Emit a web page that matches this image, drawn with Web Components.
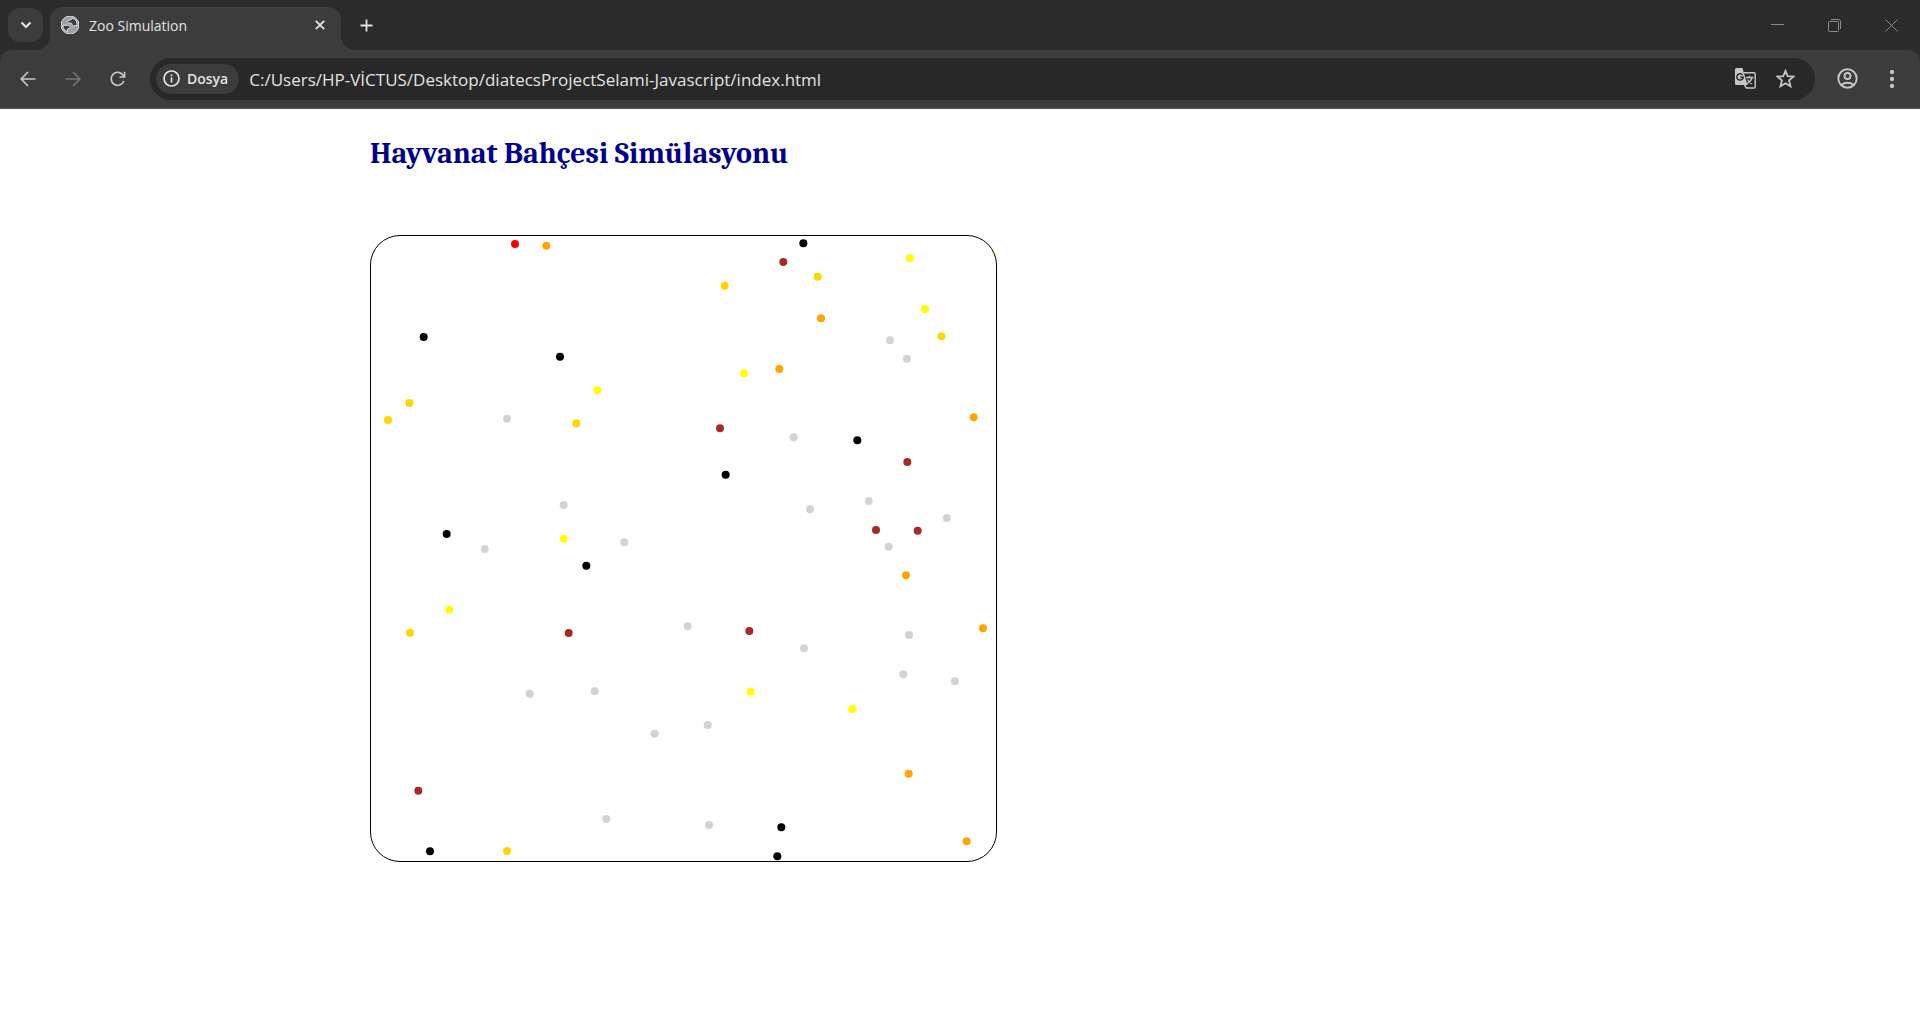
<!DOCTYPE html>
<html lang="tr">
<head>
<meta charset="utf-8">
<title>Zoo Simulation</title>
<style>
html, body { margin: 0; height: 100%; }
body { display: flex; flex-direction: column; background: #fff; }
</style>
</head>
<body>
<browser-frame>
  <tab-strip slot="tabs" label="Zoo Simulation"></tab-strip>
  <address-bar slot="bar" scheme="Dosya" url="C:/Users/HP-VİCTUS/Desktop/diatecsProjectSelami-Javascript/index.html"></address-bar>
</browser-frame>
<zoo-page>
  <span slot="title">Hayvanat Bahçesi Simülasyonu</span>
  <zoo-field></zoo-field>
</zoo-page>
<script>
const define = (name, html, setup) => customElements.define(name, class extends HTMLElement {
  connectedCallback() {
    if (this.shadowRoot) return;
    this.attachShadow({ mode: 'open' }).innerHTML = html;
    if (setup) setup(this, this.shadowRoot);
  }
});

const BUTTON = `button { display: flex; align-items: center; justify-content: center; padding: 0; border: 0; background: none; color: inherit; font: inherit; }
svg { display: block; fill: none; stroke: currentColor; }`;

define('browser-frame', `<style>
:host { display: flex; flex-direction: column; background: #2b2b2b; color: #e3e3e3; font-family: "Open Sans", "Noto Sans", sans-serif; }
.bar { background: #3c3c3c; border-radius: 12px 12px 0 0; border-bottom: 2px solid #4a4a4a; }
</style><slot name="tabs"></slot><div class="bar"><slot name="bar"></slot></div>`);

define('tab-strip', `<style>${BUTTON}
:host { display: flex; height: 50px; padding-left: 8px; color: #e3e3e3; }
.search { width: 35px; height: 34px; margin-top: 8px; border-radius: 12px; background: #3c3c3c; }
.tab { display: flex; align-items: center; position: relative; width: 291px; height: 43px; margin: 7px 0 0 7px; padding: 0 11px; box-sizing: border-box; border-radius: 13px 13px 0 0; background: #3c3c3c; }
.tab::before, .tab::after { content: ""; position: absolute; bottom: 0; width: 14px; height: 14px; }
.tab::before { left: -14px; background: radial-gradient(circle at 0 0, transparent 14px, #3c3c3c 14px); }
.tab::after { right: -14px; background: radial-gradient(circle at 100% 0, transparent 14px, #3c3c3c 14px); }
.name { flex: 1; margin-left: 10px; padding-bottom: 6px; font-size: 14px; line-height: 20px; }
.icon, .close { margin-bottom: 7px; }
.close { width: 20px; height: 20px; }
.new { width: 50px; }
.win { width: 57px; color: #8c8c8c; }
.gap { flex: 1; }
</style>
<button class="search" aria-label="Sekme ara"><svg width="12" height="8" stroke-width="2.200"><path d="M1.500 1.500 6 6l4.500-4.500"/></svg></button>
<div class="tab">
<svg class="icon" width="18" height="18" viewBox="0 0 18 18" stroke="none"><circle cx="9" cy="9" r="9" fill="#9aa0a6"/><path fill="#3c3c3c" d="M11 2.100c-.2 1.300-.8 1.900-2 1.900-1.500 0-2.300.7-2.300 1.900 0 .8.500 1.200 1.300 1.200h1.500c1.100 0 1.600.5 1.600 1.500 0 .9.500 1.400 1.400 1.400.8 0 1.200-.5 1.900-.5h1.800A7.200 7.200 0 0 0 11 2.100zM1.800 9.300h4.400c1.800 0 2.900.8 2.900 2.100 0 .8-.6 1.100-1.300 1.100-.9 0-1.300.5-1.300 1.200V15.700A7.200 7.200 0 0 1 1.800 9.300z"/></svg>
<span class="name"></span>
<button class="close" aria-label="Kapat"><svg width="10" height="10" stroke-width="1.800"><path d="m.8.8 8.400 8.400m0-8.400L.8 9.200"/></svg></button>
</div>
<button class="new" aria-label="Yeni sekme"><svg width="13" height="13" stroke-width="1.800"><path d="M6.500 .5v12M.5 6.500h12"/></svg></button>
<div class="gap"></div>
<button class="win" aria-label="Simge durumu"><svg width="13" height="13"><path d="M0 5.500h13"/></svg></button>
<button class="win" aria-label="Geri yükle"><svg width="13" height="13"><path d="M.5 3.500q0-1 1-1h8q1 0 1 1v8q0 1-1 1h-8q-1 0-1-1zM3 .5h7.500q2 0 2 2V10"/></svg></button>
<button class="win" aria-label="Pencereyi kapat"><svg width="13" height="13"><path d="m.5.5 12 12m0-12-12 12"/></svg></button>
`, (el, root) => { root.querySelector('.name').textContent = el.getAttribute('label'); });

define('address-bar', `<style>${BUTTON}
:host { display: flex; align-items: center; height: 57px; color: #c7c7c7; }
.nav { width: 45px; height: 44px; }
.nav:first-of-type { margin-left: 5px; }
.off { color: #757575; }
.box { flex: 1; display: flex; align-items: center; min-width: 0; height: 42px; margin-left: 10px; padding: 0 10px 0 6px; border-radius: 21px; background: #282828; }
.chip { gap: 7px; height: 30px; padding: 0 11px 0 7px; border-radius: 15px; background: #3c3c3c; color: #e3e3e3; font-size: 14px; font-weight: 600; line-height: 20px; }
input { flex: 1; min-width: 0; margin: 0 0 0 10px; padding: 2px 0 0; border: 0; outline: 0; background: none; color: #e3e3e3; font-family: inherit; font-size: 17px; line-height: 24px; }
.in { width: 40px; height: 40px; }
.user { width: 44px; height: 44px; margin-left: 10px; }
.more { width: 45px; height: 44px; margin-right: 6px; }
</style>
<button class="nav" aria-label="Geri"><svg width="16" height="16" stroke-width="1.700"><path d="M15.500 8H1.500M8 1 1.200 8 8 15"/></svg></button>
<button class="nav off" aria-label="İleri"><svg width="16" height="16" stroke-width="1.700"><path d="M.5 8h14M8 1l6.800 7L8 15"/></svg></button>
<button class="nav" aria-label="Yenile"><svg width="16" height="16" stroke-width="1.700"><path d="M13.800 10A6.500 6.500 0 1 1 13.300 4.500L14.500 6M14.600 .8V6H9.500"/></svg></button>
<div class="box">
<button class="chip"><svg width="17" height="17" stroke-width="1.700"><circle cx="8.500" cy="8.500" r="7.500"/><path d="M8.500 7.500v5M8.500 4.500v1.800"/></svg><span></span></button>
<input aria-label="Adres" spellcheck="false">
<button class="in" aria-label="Çevir"><svg width="21" height="21" viewBox="0 0 21 21"><path d="M9 4.700h10q1.200 0 1.200 1.200v12.900q0 1.200-1.200 1.200h-7.500L9.500 17" stroke-width="1.400"/><path fill="currentColor" stroke="none" d="M1.500 0h6l1.200 4.200L12.500 17H1.500Q0 17 0 15.500v-14Q0 0 1.500 0z"/><path d="M7.600 7A3.200 3.200 0 1 0 8.200 9.300H5.200" stroke="#282828" stroke-width="1.500"/><path d="M11 9.500h7.500M14.500 7.800v1.700M17 9.500q-1 4-5 6M12.500 11.500q2 3.500 4.500 4.500" stroke-width="1.300"/></svg></button>
<button class="in" aria-label="Yer işareti"><svg width="19" height="19" viewBox="0 0 19 19" stroke-width="1.800"><path d="m9.500 1.900 2.200 5.200 5.900.5-4.500 3.800 1.400 5.900-5-3.100-5 3.100 1.400-5.900-4.500-3.800 5.900-.5z"/></svg></button>
</div>
<button class="user" aria-label="Profil"><svg width="21" height="21" viewBox="0 0 21 21" stroke-width="1.900"><circle cx="10.500" cy="10.500" r="9.200"/><circle cx="10.500" cy="8" r="3"/><path d="M4 17q6.500-4.600 13 0"/></svg></button>
<button class="more" aria-label="Menü"><svg width="4" height="18" stroke="none"><g fill="currentColor"><circle cx="2" cy="2" r="1.800"/><circle cx="2" cy="9" r="1.800"/><circle cx="2" cy="16" r="1.800"/></g></svg></button>
`, (el, root) => {
  root.querySelector('.chip span').textContent = el.getAttribute('scheme');
  root.querySelector('input').value = el.getAttribute('url');
});

define('zoo-page', `<style>
:host { display: flex; flex-direction: column; align-items: flex-start; padding: 26px 0 0 370px; }
h1 { margin: 0 0 62px; color: #00008b; font: bold 30px/38px Cambria, Caladea, "Liberation Serif", serif; }
</style><h1><slot name="title"></slot></h1><slot></slot>`);

/* Each herd: colour, then x,y pairs in thirds of a pixel from the pen's outer corner. */
const HERDS = {
  red: [435,27],
  black: [161,306, 570,365, 230,897, 649,992, 180,1849, 1300,25, 1462,616, 1067,719, 1234,1777, 1222,1864],
  orange: [529,32, 1353,250, 1228,402, 1811,547, 1608,1021, 1839,1180, 1616,1616, 1790,1819, 1879,49],
  gold: [118,504, 54,555, 619,565, 1343,125, 1064,152, 1714,304, 120,1193, 411,1848],
  yellow: [682,466, 1620,70, 1665,222, 1122,415, 581,911, 238,1124, 1142,1370, 1447,1422],
  brown: [1240,81, 1050,580, 1612,681, 1518,885, 1643,887, 596,1194, 145,1667, 1138,1188],
  lightgray: [411,551, 581,810, 344,942, 763,922, 479,1376, 674,1369, 854,1496, 709,1752, 1560,316, 1611,371, 1271,607, 1320,823, 1496,798, 1730,849, 1556,935, 953,1174, 1302,1240, 1617,1200, 1600,1318, 1755,1339, 1013,1470, 1017,1770]
};

define('zoo-field', `<style>
:host { display: block; border: 1px solid #000; border-radius: 30px; overflow: hidden; }
svg { display: block; }
</style><svg width="625" height="625" viewBox="3 3 1875 1875" role="img" aria-label="Hayvanlar"></svg>`, (el, root) => {
  root.querySelector('svg').innerHTML = Object.entries(HERDS).map(([color, p]) => {
    let dots = '';
    for (let i = 0; i < p.length; i += 2) dots += `<circle cx="${p[i]}" cy="${p[i + 1]}" r="12"/>`;
    return `<g fill="${color}">${dots}</g>`;
  }).join('');
});
</script>
</body>
</html>
